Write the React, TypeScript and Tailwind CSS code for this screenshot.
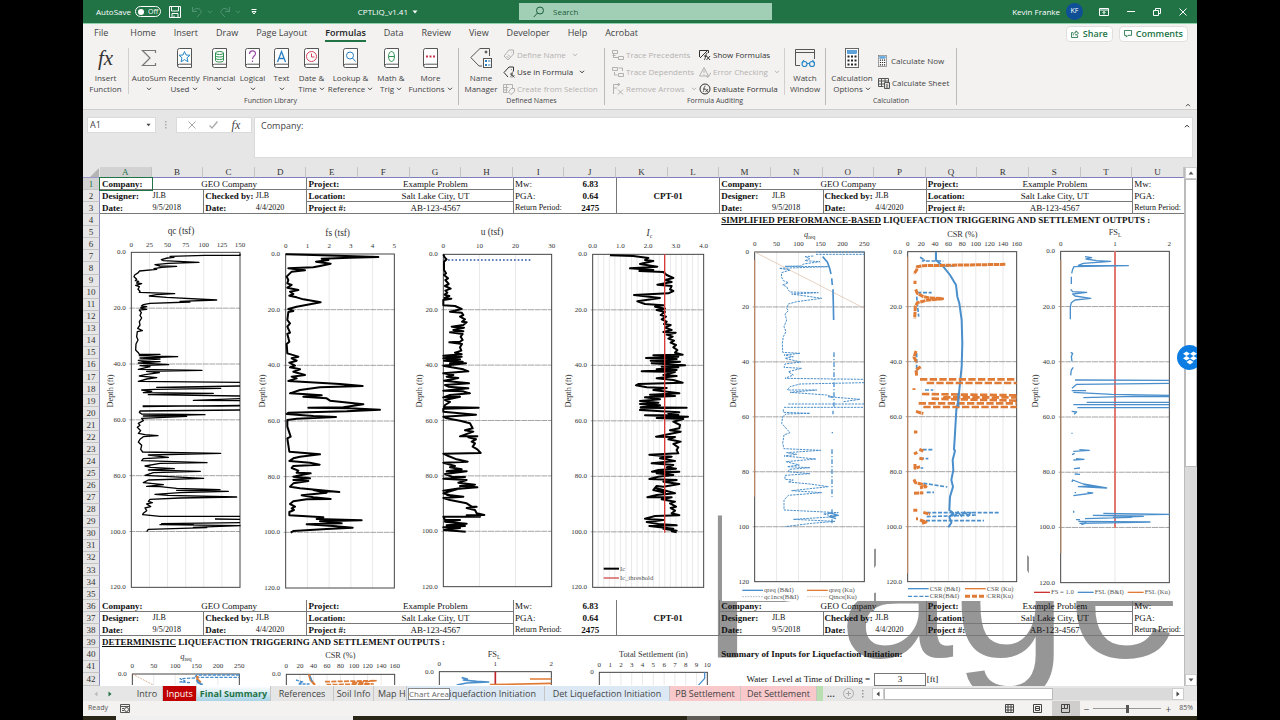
import { useState } from "react";
import type { ReactNode } from "react";

const COLUMNS = "ABCDEFGHIJKLMNOPQRSTU".split("");
const ROWS = Array.from({ length: 42 }, (_, i) => i + 1);

/* ---------- small icons ---------- */

const Caret = ({ className = "" }: { className?: string }) => (
    <svg viewBox="0 0 6 4" className={`inline-block h-1 w-1.5 ${className}`} fill="none" stroke="currentColor" strokeWidth="1">
        <path d="M1 .8 3 2.8 5 .8" />
    </svg>
);

const Triangle = ({ className = "" }: { className?: string }) => (
    <svg viewBox="0 0 6 4" className={`h-1 w-1.5 ${className}`} fill="currentColor">
        <path d="M.5.5h5L3 3.5z" />
    </svg>
);

const Book = ({ children }: { children: ReactNode }) => (
    <svg viewBox="0 0 15 20" className="h-5 w-[15px]" fill="none" strokeWidth="1">
        <path d="M2.5.5h12v19h-12a2 2 0 0 1-2-2v-15a2 2 0 0 1 2-2z" fill="#fff" stroke="#555" />
        <path d="M.5 18a2 2 0 0 1 2-1.8h12" stroke="#555" />
        {children}
    </svg>
);

const Fx = ({ className }: { className: string }) => (
    <span className={`font-['Liberation_Serif',serif] italic ${className}`}>fx</span>
);

const Calculator = ({ className }: { className: string }) => (
    <svg viewBox="0 0 14 20" className={className} fill="none">
        <rect x=".5" y=".5" width="13" height="19" fill="#fff" stroke="#666" />
        <rect x="2.5" y="2.5" width="9" height="3" fill="#5ba3dc" stroke="#2b7cc0" strokeWidth=".6" />
        <path d="M2.5 8.5h9M2.5 12.5h9M2.5 16.5h9" stroke="#222" strokeWidth="2" strokeDasharray="2 1.5" />
    </svg>
);

/* ---------- ribbon ---------- */

const BigButton = ({ icon, lines, width, caret = false }: { icon: ReactNode; lines: [string, string]; width: string; caret?: boolean }) => (
    <button className={`flex shrink-0 flex-col items-center whitespace-nowrap text-[8px] leading-[11px] ${width}`}>
        <span className="mb-1 flex h-5 items-center">{icon}</span>
        <span>{lines[0]}</span>
        <span className="flex h-[11px] items-center gap-0.5">
            {lines[1]}
            {caret && <Caret />}
        </span>
    </button>
);

const SmallButton = ({ icon, label, caret = false, disabled = false }: { icon: ReactNode; label: string; caret?: boolean; disabled?: boolean }) => (
    <button disabled={disabled} className="flex h-[13px] items-center gap-0.5 whitespace-nowrap text-[8px] leading-[13px] text-[#333] disabled:text-[#b3b1af]">
        <svg viewBox="0 0 12 12" className="h-3 w-3 shrink-0" fill="none" stroke="currentColor" strokeWidth="1">
            {icon}
        </svg>
        {label}
        {caret && <Caret className="ml-1" />}
    </button>
);

const Group = ({ label, width, children }: { label: string; width: string; children: ReactNode }) => (
    <section className={`my-1 flex shrink-0 flex-col justify-between border-r border-[#bdbbb9] ${width}`}>
        <div className="flex">{children}</div>
        <div className="text-center text-[7px] leading-[9px] text-[#444]">{label}</div>
    </section>
);

const MENU = ["Home", "Insert", "Draw", "Page Layout", "Formulas", "Data", "Review", "View", "Developer", "Help", "Acrobat"];

const Ribbon = () => (
    <div className="flex h-[66px] border-b border-[#d0cecc] bg-[#f3f2f1] text-[#444]">
        <Group label="Function Library" width="w-[376px]">
            <BigButton width="w-[46px] border-r border-[#d2d0ce]" lines={["Insert", "Function"]} icon={<Fx className="text-[21px] text-[#333]" />} />
            <BigButton
                width="w-[40px]"
                lines={["AutoSum", ""]}
                caret
                icon={
                    <svg viewBox="0 0 16 18" className="h-[18px] w-4" fill="none" stroke="#777" strokeWidth="1.2">
                        <path d="M14.500 4V1.500H1.500L9 9l-7.500 7.500h13V14" />
                    </svg>
                }
            />
            <BigButton width="w-[30px]" lines={["Recently", "Used"]} caret icon={<Book><path d="m7.500 3.500 1.500 3.500 4 .2-3 2.600 1 4-3.500-2.200L4 13.800l1-4-3-2.600 4-.2z" stroke="#2b88c8" /></Book>} />
            <BigButton
                width="w-[40px]"
                lines={["Financial", ""]}
                caret
                icon={
                    <Book>
                        <ellipse cx="7.500" cy="5" rx="4" ry="1.500" stroke="#2e9150" />
                        <path d="M3.500 5v7.500c0 2 8 2 8 0V5M3.500 7.500c0 2 8 2 8 0M3.500 10c0 2 8 2 8 0" stroke="#2e9150" />
                    </Book>
                }
            />
            <BigButton width="w-[27px]" lines={["Logical", ""]} caret icon={<Book><path d="M4.500 6c0-4 6-4 6-.5 0 2.500-3 2.500-3 5.500M7.500 12.500v1.500" stroke="#9b4fa8" strokeWidth="1.200" /></Book>} />
            <BigButton width="w-[31px]" lines={["Text", ""]} caret icon={<Book><path d="M3.500 14 7.500 3.500 11.500 14M5 10.500h5" stroke="#2b7fc2" strokeWidth="1.300" /></Book>} />
            <BigButton width="w-[29px]" lines={["Date &", "Time"]} caret icon={<Book><circle cx="7.500" cy="8.500" r="5" stroke="#d1435b" /><path d="M7.500 5.500v3.500h3" stroke="#d1435b" /></Book>} />
            <BigButton width="w-[49px]" lines={["Lookup &", "Reference"]} caret icon={<Book><circle cx="7" cy="7.500" r="3.500" stroke="#2b7fc2" /><path d="m9.500 10 3 3.500" stroke="#2b7fc2" /></Book>} />
            <BigButton width="w-[32px]" lines={["Math &", "Trig"]} caret icon={<Book><ellipse cx="7.500" cy="8.500" rx="3" ry="5" stroke="#2e9150" /><path d="M4.500 8.500h6" stroke="#2e9150" /></Book>} />
            <BigButton width="w-[47px]" lines={["More", "Functions"]} caret icon={<Book><path d="M3 8.500h9.500" stroke="#c8344a" strokeWidth="2" strokeDasharray="2 1.500" /></Book>} />
        </Group>

        <Group label="Defined Names" width="w-[146px]">
            <BigButton
                width="w-[44px]"
                lines={["Name", "Manager"]}
                icon={
                    <svg viewBox="0 0 22 22" className="h-[22px] w-[22px]" fill="none" stroke="#555">
                        <path d="M10 1.500h9.500V9M10 1.500.8 10.500 9 19h3" />
                        <circle cx="16" cy="5" r="1" fill="#555" />
                        <rect x="13.500" y="11.500" width="8" height="9" fill="#fff" />
                        <path d="M15 14h2M15 18h2" stroke="#2b7fc2" strokeWidth="2" />
                        <path d="M18 14h2.500M18 18h2.500" stroke="#2b7fc2" />
                    </svg>
                }
            />
            <div className="flex flex-col gap-1">
                <SmallButton disabled caret label="Define Name" icon={<path d="M6 1h4.500v4L5 11 1 7zM8.500 3v.5M3.500 7 6 9.500M5 5.500 7.500 8" />} />
                <SmallButton caret label="Use in Formula" icon={<><path d="M10.500 5V1H6L1 6.500 5 11M8.500 3v.5" /><path d="M10.500 5.500c-2-.5-1.500 5-3 5.500M7 8h3M9 9l2.500 2.500M11.500 9 9 11.500" strokeWidth=".8" /></>} />
                <SmallButton disabled label="Create from Selection" icon={<><path d="M.5 1.500h9V5M.5 1.500v8h4M.5 4.500h5M.5 7h4M3.500 1.500v8" /><path d="M8 5.500h3.500v3L8 11.500 5.500 9z" /></>} />
            </div>
        </Group>

        <Group label="Formula Auditing" width="w-[221px]">
            <div className="flex w-[94px] shrink-0 flex-col gap-1 pl-[7px]">
                <SmallButton disabled label="Trace Precedents" icon={<path d="M.5 1.500h5v3h-5zM.5 6.500h3M1.500 4.500v4h5M6.500 7.500h5v3h-5z" />} />
                <SmallButton disabled label="Trace Dependents" icon={<path d="M.5 1.500h5v3h-5zM6.500 2h4v3M6.500 7.500h5v3h-5zM2.500 6v3h3" />} />
                <SmallButton disabled caret label="Remove Arrows" icon={<path d="M1.500 11V1.500H8L5.500 0M8 1.500 5.500 3M1.500 5H5M6 6.500l5 5M11 6.500l-5 5" />} />
            </div>
            <div className="flex flex-col gap-1">
                <SmallButton label="Show Formulas" icon={<><path d="M.5 8V1.500h9V4M1 9 9 1" /><path d="M8.500 4c-2-.5-1.500 6-3.500 7M5 7h3M7.500 7l3.500 4M11 7l-3.500 4" /></>} />
                <SmallButton disabled caret label="Error Checking" icon={<><path d="M5 1.500 9.500 10h-9zM5 4v3M5 8v1" /><path d="m7 10 2 1.500 3-5" /></>} />
                <SmallButton label="Evaluate Formula" icon={<><circle cx="6" cy="6" r="5" /><path d="M6.500 3c-2-.5-1 5-2.500 6M4 6h2.500M6.500 6 9 9M9 6 6.500 9" strokeWidth=".8" /></>} />
            </div>
            <div className="ml-auto border-l border-[#d2d0ce]">
                <BigButton
                    width="w-[40px]"
                    lines={["Watch", "Window"]}
                    icon={
                        <svg viewBox="0 0 22 20" className="h-5 w-[22px]" fill="none" stroke="#555">
                            <path d="M6 17.500H1.500v-16h19V11M1.500 4.500h19" />
                            <g stroke="#2b88c8" strokeWidth="1.200">
                                <circle cx="10.500" cy="16" r="2.500" />
                                <circle cx="18" cy="16" r="2.500" />
                                <path d="M13 15.500h2.500M8 15l2-3M20.500 15l-2-3" />
                            </g>
                        </svg>
                    }
                />
            </div>
        </Group>

        <Group label="Calculation" width="w-[131px]">
            <BigButton width="w-[52px]" lines={["Calculation", "Options"]} caret icon={<Calculator className="h-5 w-[14px]" />} />
            <div className="flex flex-col gap-2 pt-1.5">
                <button className="flex h-[14px] items-center gap-1 whitespace-nowrap text-[8px]">
                    <Calculator className="h-3 w-[9px]" />
                    Calculate Now
                </button>
                <button className="flex h-[14px] items-center gap-0.5 whitespace-nowrap text-[8px]">
                    <svg viewBox="0 0 12 12" className="h-3 w-3" fill="none" stroke="#555">
                        <path d="M.5 1.500h10V5M.5 1.500v8h5M.5 4h10M.5 7H6M3.500 1.500v8M7 1.500V5" />
                        <path d="M6.500 5.500h5v6h-5zM8 8h2M8 10h2" fill="#ddd" />
                    </svg>
                    Calculate Sheet
                </button>
            </div>
        </Group>
        <button aria-label="Collapse the ribbon" className="mr-1.5 mb-0.5 ml-auto flex self-end">
            <Caret className="rotate-180" />
        </button>
    </div>
);

const TitleBar = () => (
    <header className="flex h-6 items-center border-b border-[#8fd0ac] bg-[#217346] text-[8px] text-white">
        <div className="flex w-[436px] shrink-0 items-center pl-[13px]">
            <label htmlFor="autosave">AutoSave</label>
            <button id="autosave" className="ml-1 flex h-[11px] w-[26px] items-center gap-1 rounded-full border border-white pl-0.5 text-[7px] leading-[9px]">
                <span className="size-1.5 rounded-full bg-white" />
                Off
            </button>
            <button aria-label="Save" className="ml-2">
                <svg viewBox="0 0 12 12" className="size-3" fill="none" stroke="#fff">
                    <path d="M.5.500h11v11H.500zM2.500.500V5h7V.500M3 11.500V7.500h6v4M5 9.500v2" />
                </svg>
            </button>
            <button aria-label="Undo" className="ml-2.5 flex items-center gap-1 text-[#4f9470]">
                <svg viewBox="0 0 12 12" className="size-3" fill="none" stroke="currentColor">
                    <path d="M1.500 1v4.500H6M1.500 5.500C5 0 12 3 9.500 7.500L6 11" />
                </svg>
                <Caret />
            </button>
            <button aria-label="Redo" className="ml-1.5 flex items-center gap-1 text-[#4f9470]">
                <svg viewBox="0 0 12 12" className="size-3" fill="none" stroke="currentColor">
                    <path d="M10.500 1v4.500H6M10.500 5.500C7 0 0 3 2.500 7.500L6 11" />
                </svg>
                <Caret />
            </button>
            <button aria-label="Customize toolbar" className="ml-2.5">
                <svg viewBox="0 0 6 6" className="size-1.5" fill="none" stroke="#fff">
                    <path d="M.5.500h5M1 2.500h4L3 5z" />
                </svg>
            </button>
            <button className="mr-[101px] ml-auto flex items-center gap-1">
                CPTLIQ_v1.41
                <Triangle />
            </button>
        </div>
        <label className="flex h-[17px] w-[253px] shrink-0 items-center bg-[#a0cfb6] pl-3.5 text-[#1c5c3a]">
            <svg viewBox="0 0 12 12" className="size-3" fill="none" stroke="currentColor">
                <circle cx="7" cy="4.500" r="3.500" />
                <path d="M4.500 7 .8 11" />
            </svg>
            <input aria-label="Search" placeholder="Search" className="ml-2 w-40 bg-transparent outline-none placeholder:text-[#1c5c3a]" />
        </label>
        <div className="ml-auto flex items-center">
            <span>Kevin Franke</span>
            <span className="ml-1.5 flex size-[17px] items-center justify-center rounded-full bg-[#0f4f96] text-[7px]">KF</span>
            <button aria-label="Ribbon display options" className="ml-4">
                <svg viewBox="0 0 10 8" className="h-2 w-2.5" fill="none" stroke="#fff">
                    <path d="M.5.500h9v7h-9zM.5 2h9M5 6.500V3.500M3.500 5 5 3.500 6.500 5" />
                </svg>
            </button>
            <button aria-label="Minimize" className="ml-[18px] h-px w-2 bg-white" />
            <button aria-label="Restore" className="ml-[18px]">
                <svg viewBox="0 0 8 8" className="size-2" fill="none" stroke="#fff">
                    <path d="M.5 2.500h5v5h-5zM2.500 2.500v-2h5v5h-2" />
                </svg>
            </button>
            <button aria-label="Close" className="mr-2.5 ml-[18px]">
                <svg viewBox="0 0 8 8" className="size-2" fill="none" stroke="#fff">
                    <path d="m.5.500 7 7M7.500.500l-7 7" />
                </svg>
            </button>
        </div>
    </header>
);

const MenuBar = () => (
    <nav className="flex h-5 items-center bg-[#f3f2f1] pr-[9px] pl-[11px] text-[9px] leading-[14px] text-[#444]">
        <button className="mr-[22px] border-b-2 border-transparent">File</button>
        <div className="flex gap-[18px]">
            {MENU.map((item) => (
                <button key={item} className={item === "Formulas" ? "border-b-2 border-[#217346] font-semibold text-[#222]" : "border-b-2 border-transparent"}>
                    {item}
                </button>
            ))}
        </div>
        <button className="ml-auto flex h-4 items-center gap-1 rounded-sm border border-[#e1dfdd] bg-white px-1 font-semibold text-[#217346]">
            <svg viewBox="0 0 9 9" className="size-2" fill="none" stroke="currentColor">
                <path d="M2.500 3H.500v5.500h7V6M2.500 6c0-2 1-3 3-3V1l3 2.500-3 2.500V4.500" />
            </svg>
            Share
        </button>
        <button className="ml-1.5 flex h-4 items-center gap-1 rounded-sm border border-[#e1dfdd] bg-white px-1 font-semibold text-[#217346]">
            <svg viewBox="0 0 9 9" className="size-2" fill="none" stroke="currentColor">
                <path d="M.5.500h8v5.500h-4l-2 2V6h-2z" />
            </svg>
            Comments
        </button>
    </nav>
);

const FormulaBar = () => (
    <div className="flex h-[57px] items-start bg-[#e6e6e6] px-1 pt-[7px] text-[#444]">
        <div className="flex h-4 w-[69px] items-center border border-[#dadada] bg-white pr-1 pl-0.5">
            <input aria-label="Name box" defaultValue="A1" className="w-14 text-[9px] outline-none" />
            <Triangle />
        </div>
        <svg viewBox="0 0 2 8" className="mx-[9px] mt-1 h-2 w-0.5" fill="#aaa">
            <path d="M0 0h1.500v1.500H0zM0 3h1.500v1.500H0zM0 6h1.500v1.500H0z" />
        </svg>
        <div className="flex h-4 w-[76px] items-center justify-around border border-[#dadada] bg-white px-1">
            <button aria-label="Cancel">
                <svg viewBox="0 0 8 8" className="size-2" stroke="#aaa"><path d="m.5.500 7 7M7.500.500l-7 7" /></svg>
            </button>
            <button aria-label="Enter">
                <svg viewBox="0 0 9 8" className="h-2 w-[9px]" fill="none" stroke="#aaa" strokeWidth="1.300"><path d="m.5 4.500 2.500 2.500L8.500.500" /></svg>
            </button>
            <button aria-label="Insert function" className="flex"><Fx className="text-[12px] leading-[14px]" /></button>
        </div>
        <div className="ml-0.5 flex h-[41px] flex-1 border border-[#dadada] bg-white">
            <textarea aria-label="Formula" defaultValue="Company:" className="flex-1 resize-none pt-px pl-1.5 text-[9px] leading-[14px] outline-none" />
            <button aria-label="Collapse formula bar" className="mt-1.5 mr-0.5 flex self-start text-[#222]">
                <Caret className="rotate-180" />
            </button>
        </div>
    </div>
);

/* ---------- sheet cells ---------- */

const LINE = "border-[#777]";

const InfoCells = ({ line, short = false }: { line: number; short?: boolean }) => {
    const values = [
        ["Example Problem", "Project:", "Mw:", "6.83"],
        ["Salt Lake City, UT", "Location:", "PGA:", "0.64"],
        ["AB-123-4567", "Project #:", "Return Period:", "2475"],
    ][line];
    const under = `border-b ${LINE}`;
    const last = line === 2 ? under : "";
    const left = short ? `border-l pl-px ${LINE}` : "pl-0.5";
    return (
        <>
            {line === 0 ? (
                <>
                    <td className={`font-bold ${left} ${under}`}>Company:</td>
                    <td colSpan={3} className={`text-center ${under}`}>GEO Company</td>
                </>
            ) : (
                <>
                    <td className={`font-bold ${left} ${last}`}>{line === 1 ? "Designer:" : "Date:"}</td>
                    <td className={`pl-px text-[8px] ${last}`}>{line === 1 ? "JLB" : "9/5/2018"}</td>
                    <td className={`border-l pl-px font-bold ${LINE} ${last}`}>{line === 1 ? "Checked by:" : "Date:"}</td>
                    <td className={`pl-px text-[8px] ${last}`}>{line === 1 ? "JLB" : "4/4/2020"}</td>
                </>
            )}
            <td className={`border-b border-l pl-px font-bold ${LINE}`}>{values[1]}</td>
            <td colSpan={3} className={`border-b text-center ${LINE}`}>{values[0]}</td>
            <td className={`border-l pl-px ${LINE} ${last} ${line === 2 ? "text-[8px]" : ""}`}>{values[2]}</td>
            {!short && (
                <>
                    <td className={`text-center font-bold ${last}`}>{values[3]}</td>
                    {line === 0 && (
                        <td rowSpan={3} colSpan={2} className={`border-b border-l text-center font-bold ${LINE}`}>CPT-01</td>
                    )}
                </>
            )}
        </>
    );
};

const OutputTitle = ({ kind }: { kind: string }) => (
    <>
        <span className="underline">{kind}</span> LIQUEFACTION TRIGGERING AND SETTLEMENT OUTPUTS :
    </>
);

const RowCells = ({ row }: { row: number }) => {
    const info = row <= 3 ? row - 1 : row >= 36 && row <= 38 ? row - 36 : -1;
    if (info >= 0) return <><InfoCells line={info} /><InfoCells line={info} short /></>;
    if (row === 4) return <><td colSpan={12} /><td colSpan={9} className="pl-0.5 font-bold"><OutputTitle kind="SIMPLIFIED PERFORMANCE-BASED" /></td></>;
    if (row === 39) return <td colSpan={21} className="pl-0.5 font-bold"><OutputTitle kind="DETERMINISTIC" /></td>;
    if (row === 40) return <><td colSpan={12} /><td colSpan={9} className="pl-0.5 font-bold">Summary of Inputs for Liquefaction Initiation:</td></>;
    if (row === 42)
        return (
            <>
                <td colSpan={12} />
                <td colSpan={3} className="pr-1 text-right">Water&nbsp; Level at Time of Drilling =</td>
                <td className={`border text-center ${LINE}`}>3</td>
                <td colSpan={5} className="pl-px">[ft]</td>
            </>
        );
    return <td colSpan={21} />;
};

const Grid = () => (
    <table className="relative h-[519px] w-full table-fixed border-separate border-spacing-0 font-['Liberation_Serif',serif] text-[9px] leading-[10px] whitespace-nowrap text-[#111]">
        <colgroup>
            <col className="w-[17px]" />
            {COLUMNS.map((c) => <col key={c} />)}
        </colgroup>
        <thead>
            <tr className="bg-[#e6e6e6]">
                <th aria-label="Select all" className="border-b border-[#9a9ac8]">
                    <svg viewBox="0 0 10 9" className="ml-auto h-[9px] w-2.5" fill="#b5b5b5"><path d="M9 0v9H0z" /></svg>
                </th>
                {COLUMNS.map((c) => (
                    <th key={c} className={c === "A" ? "border-r border-b border-r-[#c4c4c4] border-b-[#217346] bg-[#d2d2d2] font-normal text-[#217346]" : "border-r border-b border-r-[#c4c4c4] border-b-[#7d7dc0] font-normal text-[#333]"}>
                        {c}
                    </th>
                ))}
            </tr>
        </thead>
        <tbody>
            {ROWS.map((row) => (
                <tr key={row} className={row === 1 ? "[&>td:nth-child(2)]:outline-1 [&>td:nth-child(2)]:outline-[#217346]" : ""}>
                    <th scope="row" className={row === 1 ? "border-r border-b border-r-[#217346] border-b-[#c4c4c4] bg-[#d2d2d2] font-normal text-[#217346]" : "border-r border-b border-r-[#8a8ac4] border-b-[#c4c4c4] bg-[#e6e6e6] font-normal text-[#333]"}>
                        {row}
                    </th>
                    <RowCells row={row} />
                </tr>
            ))}
        </tbody>
    </table>
);

/* ---------- charts, drawn at three units to the pixel ---------- */

type ChartProps = {
    className: string;
    view: string;
    plot: [number, number, number, number];
    xLabels: string[];
    xLabelY: number;
    yLabels: string[];
    title: ReactNode;
    titleAt: [number, number];
    titleSize?: number;
    depthX?: number;
    grid?: number;
    name: string;
    children?: ReactNode;
};

const Chart = ({ className, view, plot, xLabels, xLabelY, yLabels, title, titleAt, titleSize = 28, depthX, grid, name, children }: ChartProps) => {
    const [left, right, top, bottom] = plot;
    const columns = grid ?? xLabels.length - 1;
    const rowStep = (bottom - top) / 6;
    return (
        <svg role="img" aria-label={name} viewBox={view} className={`absolute bg-white font-['Liberation_Serif',serif] ${className}`} fill="#333" fontSize="21">
            <text x={titleAt[0]} y={titleAt[1]} textAnchor="middle" fontSize={titleSize}>{title}</text>
            {xLabels.map((label, i) => (
                <text key={label} x={left + ((right - left) * i) / (xLabels.length - 1)} y={xLabelY} textAnchor="middle">{label}</text>
            ))}
            {yLabels.map((label, i) => (
                <text key={label} x={left - 17} y={top + rowStep * i + 6} textAnchor="end">{label}</text>
            ))}
            {depthX && (
                <text transform={`translate(${depthX} 693) rotate(-90)`} textAnchor="middle" fontSize="25">Depth (ft)</text>
            )}
            <g fill="none">
                {Array.from({ length: columns - 1 }, (_, i) => {
                    const x = left + ((right - left) * (i + 1)) / columns;
                    return <path key={i} d={`M${x} ${top}V${bottom}`} stroke="#dedede" strokeWidth="2" />;
                })}
                {[1, 2, 3, 4, 5].map((i) => (
                    <path key={i} d={`M${left - 6} ${top + rowStep * i}H${right}`} stroke="#777" strokeWidth="2" strokeDasharray="18 2" />
                ))}
                <rect x={left} y={top} width={right - left} height={bottom - top} stroke="#444" strokeWidth="3" />
                <g strokeLinejoin="round">{children}</g>
            </g>
        </svg>
    );
};

const TENTHS = ["0.0", "20.0", "40.0", "60.0", "80.0", "100.0", "120.0"];

const QC = "480,281 480,286 375,286 270,289 282,292 262,294 244,299 250,302 357,307 265,310 225,314 240,318 290,319 245,322 222,326 230,328 178,333 175,338 164,345 162,350 170,358 166,362 176,364 170,369 185,371 167,376 178,380 174,388 180,394 178,397 284,401 230,404 208,408 260,412 410,420 300,424 330,426 210,430 190,434 184,438 200,440 182,444 200,448 178,450 184,458 180,466 185,474 178,485 180,495 173,505 187,512 172,515 170,530 174,540 168,552 167,570 175,578 178,583 240,583 178,587 293,590 180,594 240,597 175,601 190,605 240,605 175,609 266,614 180,617 210,620 175,628 366,631 200,634 238,638 195,644 178,648 230,653 200,657 190,660 175,664 480,667M480,678 230,682 422,685 225,688 185,690 215,694 190,698 400,700 205,704 480,708M480,716 340,721 480,722M480,736 188,740M188,738 480,738M480,750 180,753 178,757 185,762 375,764 190,768 320,769 185,775 190,782 175,790 180,796 172,802 182,812 175,820 195,824 234,827 190,830 180,838 175,846 185,856 182,868 188,876 422,880 205,885 265,892 190,896 185,902 381,908 240,910 195,918 212,922 283,926 205,930 361,934 220,938 195,946 371,955 205,960 190,968 250,974 200,979 240,980 290,985 420,989 290,991 445,994 300,998 225,1003 265,1006 470,1011 300,1014 210,1018 205,1024 217,1028 200,1032 212,1040 195,1044 200,1052 190,1060 188,1064 240,1069 480,1069M480,1078 405,1077M480,1088 245,1091 340,1092 240,1094 480,1097 340,1102 380,1103 205,1108 200,1115";
const FS = "617,283 700,285 895,291 810,293 725,296 745,300 708,305 752,311 720,318 700,322 625,325 675,331 635,335 620,350 625,360 622,370 635,375 622,383 655,390 630,395 640,402 628,407 650,412 670,418 722,427 690,433 650,440 625,447 640,453 625,456 622,480 630,490 622,500 630,518 622,522 628,545 620,552 622,580 655,590 635,595 650,602 628,608 645,617 630,622 660,628 640,635 675,645 635,650 650,655 625,663 780,672 848,678 720,682 660,690 630,700 680,703 725,706 670,710 740,715 750,722 850,733 790,742 685,743 810,745 900,749 800,754 625,758 620,762 700,768 768,771 650,776 622,780 622,800 632,830 622,835 628,875 720,883 660,890 640,895 628,903 690,908 719,914 640,918 635,924 655,932 650,938 692,940 660,946 640,950 690,955 640,960 685,963 640,970 630,980 660,985 778,996 700,990 740,998 665,1006 700,1012 752,1017 680,1018 640,1024 630,1032 645,1040 635,1045 642,1050 628,1056 628,1066 730,1072 710,1077 845,1081 720,1084 785,1090 680,1093 760,1098 818,1103 740,1107 640,1113 632,1118";
const U = "130,283 134,292 140,298 132,305 132,330 138,340 132,345 144,355 136,360 146,372 135,378 152,386 136,392 142,398 134,404 148,408 134,414 154,416 130,420 130,436 165,438 185,447 150,455 185,458 190,465 180,470 195,478 186,485 200,487 190,495 155,500 192,503 160,510 190,514 150,517 188,522 182,530 188,540 180,545 148,547 186,552 180,562 184,572 165,578 185,583 130,587 185,590 130,595 180,598 132,602 188,605 150,610 198,610 130,617 155,622 190,628 205,634 130,640 160,645 140,650 175,654 132,662 207,670 135,675 145,680 205,685 130,692 190,694 210,700 150,705 130,712 180,710 135,720 150,726 135,735 132,741 236,743 130,746 130,755 228,764 130,770 140,775 180,782 210,790 218,805 195,811 220,815 180,829 232,829 205,832 228,838 215,845 225,850 218,860 232,868 242,879 130,881 145,888 170,898 203,905 130,908 165,918 150,922 185,928 140,934 200,934 135,942 155,950 195,951 130,956 200,960 175,968 225,974 180,978 232,982 160,988 130,992 180,985 130,1000 165,1010 140,1004 190,1010 130,1014 150,1020 200,1030 215,1040 230,1040 200,1044 225,1050 230,1060 253,1065 200,1066 240,1070 130,1070 135,1080 180,1080 135,1085 200,1091 140,1096 195,1098 130,1102 180,1104 132,1110 197,1115";
const IC = "630,286 700,288 745,294 735,300 760,303 720,312 772,320 690,325 760,330 718,333 790,336 800,345 820,354 795,360 815,366 772,374 815,378 810,388 820,393 805,400 702,405 780,414 712,424 735,432 790,436 765,440 795,446 770,450 795,456 782,465 798,470 785,478 800,485 792,492 812,495 795,503 815,510 790,516 827,518 800,524 818,530 805,536 822,542 812,548 828,555 820,562 832,570 825,578 848,584 760,586 835,590 738,594 830,597 752,602 840,605 800,610 755,610 855,616 785,620 835,622 770,628 830,630 725,634 825,636 790,645 830,648 770,655 820,660 848,668 715,672 708,676 740,682 800,684 760,690 838,700 750,704 825,708 735,712 780,718 720,723 775,728 720,732 780,736 722,742 860,743 730,745 720,750 838,757 805,760 835,765 735,766 864,770 770,774 850,777 820,785 840,795 838,805 810,811 842,815 768,830 825,831 805,838 842,845 820,852 835,862 830,870 835,880 748,884 815,890 780,895 825,903 755,910 820,915 800,922 828,926 775,930 756,935 838,935 770,940 820,945 775,950 748,957 830,960 790,965 838,972 790,980 770,978 760,990 795,998 770,985 825,1000 770,1005 742,1012 815,1012 785,1018 825,1025 810,1030 828,1040 812,1044 825,1052 815,1060 838,1066 765,1068 735,1076 790,1080 740,1086 775,1092 830,1096 748,1098 820,1106 790,1106 830,1112 815,1114 830,1117";
const QREQ = "463,276 318,276M318,283 463,283M310,288 285,290 300,296 285,302 330,305 280,312 275,318 225,319 355,320 208,325 240,330 215,338 214,350 220,362 235,368 218,375 230,380 235,390 240,396 325,398 245,402 335,415 260,425 235,432 230,445 235,452 225,462 230,480 222,500 228,515 220,530 217,550 218,577 270,580 222,585 250,590 225,595 272,606 225,612 222,622 275,625 235,635 250,645 225,655 463,658M463,668 270,672 240,680 232,690 320,690 240,697 350,705 370,712 355,710 450,718 400,725M235,732 463,732M222,742 463,742M220,748 220,757 300,760 228,762 218,770 215,790 240,818 222,825 218,850 222,866 332,871 230,878 260,883 222,888 318,897 228,905 268,915 232,920 300,923 238,928 235,935 300,941 225,946 225,958 250,960 235,966 300,972 355,980 245,992 335,998 235,1006 222,1020 222,1050 385,1058 340,1062 378,1070 250,1078 375,1084 305,1090 225,1100";

const BLUE = "#4a8fcb";
const ORANGE = "#e07b35";

const LegendItem = ({ x, y, length, color, width = 4, dash, label }: { x: number; y: number; length: number; color: string; width?: number; dash?: string; label: string }) => (
    <>
        <path d={`M${x} ${y}h${length}`} stroke={color} strokeWidth={width} strokeDasharray={dash} />
        <text x={x + length + 3} y={y + 6} fill="#555" fontSize="20">{label}</text>
    </>
);

const sub = (main: string, lower: string, italic = false) => (
    <>
        <tspan fontStyle={italic ? "italic" : "normal"}>{main}</tspan>
        <tspan dy="6" fontSize="17">{lower}</tspan>
    </>
);

const Charts = () => (
    <>
        <Chart name="qc" className="top-[55px] left-[19px] h-[378px] w-[148px]" view="66 186 444 1134" plot={[154, 480, 277, 1282]} xLabels={["0", "25", "50", "75", "100", "125", "150"]} xLabelY={260} yLabels={TENTHS} title="qc (tsf)" titleAt={[303, 221]} depthX={99}>
            <path d={`M${QC}`} stroke="#000" strokeWidth="4" />
        </Chart>
        <Chart name="fs" className="top-[55px] left-[171px] h-[378px] w-[150px]" view="522 186 450 1134" plot={[617, 943, 282, 1284]} xLabels={["0", "1", "2", "3", "4", "5"]} xLabelY={264} yLabels={TENTHS} title="fs (tsf)" titleAt={[773, 227]} depthX={555}>
            <polyline points={FS} stroke="#000" strokeWidth="6" />
        </Chart>
        <Chart name="u" className="top-[55px] left-[327px] h-[378px] w-[152px]" view="30 186 456 1134" plot={[130, 455, 283, 1280]} xLabels={["0", "10", "20", "30"]} xLabelY={265} yLabels={TENTHS} title="u (tsf)" titleAt={[276, 225]} depthX={65}>
            <path d="M133 300H392" stroke="#2f55a4" strokeWidth="5" strokeDasharray="5 6" />
            <polyline points={U} stroke="#000" strokeWidth="6" />
        </Chart>
        <Chart name="Ic" className="top-[55px] left-[481px] h-[378px] w-[152px]" view="492 186 456 1134" plot={[578, 911, 283, 1282]} xLabels={["0.0", "1.0", "2.0", "3.0", "4.0"]} xLabelY={264} yLabels={TENTHS} title={sub("I", "c", true)} titleAt={[748, 229]} depthX={512} grid={20}>
            <polyline points={IC} stroke="#000" strokeWidth="6" />
            <path d="M794 283V1118" stroke="#d93a3a" strokeWidth="4" />
            <LegendItem x={611} y={1226} length={46} color="#000" width={6} label="Ic" />
            <LegendItem x={611} y={1254} length={46} color="#d05050" label="Ic_threshold" />
        </Chart>
        <Chart name="qreq" className="top-[59px] left-[639px] h-[375px] w-[152px]" view="36 198 456 1125" plot={[134, 463, 276, 1265]} xLabels={["0", "50", "100", "150", "200", "250"]} xLabelY={257} yLabels={["0", "20", "40", "60", "80", "100", "120"]} title={sub("q", "req", true)} titleAt={[299, 231]} titleSize={25} depthX={77}>
            <path d="M134 276 463 445" stroke="#dcb9a0" strokeWidth="2" />
            <path d="M134 300V1010" stroke="#cf8d62" strokeWidth="3" />
            <path d={`M${QREQ}`} stroke={BLUE} strokeWidth="3" strokeDasharray="7 3" />
            <path d="M338 290 352 306 359 325 363 342M365 355 367 375M369 388 371 480" stroke={BLUE} strokeWidth="5" />
            <path d="M372 577V740M369 752V763M367 816V820M366 868V1010M366 1048V1090" stroke={BLUE} strokeWidth="4" strokeDasharray="14 6 4 6" />
            <path d="M355 1058 385 1066 358 1070 378 1076" stroke={BLUE} strokeWidth="4" />
            <LegendItem x={97} y={1291} length={62} color={BLUE} label="qreq (B&amp;I)" />
            <LegendItem x={291} y={1291} length={62} color={ORANGE} label="qreq (Ku)" />
            <LegendItem x={97} y={1310} length={62} color="#8399ad" width={2} dash="5 3" label="qc1ncs(B&amp;I)" />
            <LegendItem x={291} y={1310} length={62} color="#d0b5a2" width={2} dash="5 2" label="Qtncs(Ku)" />
        </Chart>
        <Chart name="CSR" className="top-[59px] left-[793px] h-[375px] w-[151px]" view="498 198 453 1125" plot={[593, 920, 275, 1265]} xLabels={["0", "20", "40", "60", "80", "100", "120", "140", "160"]} xLabelY={257} yLabels={TENTHS} title="CSR (%)" titleAt={[757, 230]} titleSize={25} depthX={524}>
            <path d="M593 290V1240" stroke="#cf8d62" strokeWidth="3" />
            <path d="M630 292 645 300 638 303H700M620 318H740M622 398H665M620 410 626 470M645 690H670M638 869H668M630 896H655M632 924H640M640 970 712 981M650 997H672M650 1058H866M650 1070 800 1065M648 1082H822M620 580V640" stroke={BLUE} strokeWidth="5" strokeDasharray="12 5" />
            <path d="M678 275V300L700 320 720 345 738 375 742 410 748 430 755 480 757 550 755 620 749 680 745 720 739 750 735 820 732 868 735 872 728 900 730 930 724 960 729 980 720 1010 718 1050 730 1060 718 1070 724 1088 715 1102" stroke={BLUE} strokeWidth="6" />
            <path d="M724 1056 734 1068 744 1056 754 1068 764 1056 774 1068 784 1056" stroke={BLUE} strokeWidth="5" />
            <path d="M886 313 640 317 622 320 620 330 612 342M615 362V372M617 388 622 400 640 410 660 414 698 416 650 421 622 428 616 440 614 475M618 573 612 592 621 608M632 620 618 630 620 648M612 685V690M618 754 640 761M612 816H622M628 868 640 873M612 882 622 877M628 895 640 897M615 912V925L630 920M612 958 616 968 640 974 648 980 630 983M612 1000 640 998M610 1051H622M640 1057 660 1063M618 1076H624M630 1080 648 1086 636 1090" stroke={ORANGE} strokeWidth="9" strokeDasharray="16 2" />
            <path d="M630 658H920M650 669H920M636 702 920 706M700 712H920M665 716 920 722M626 730H920M640 741H920" stroke={ORANGE} strokeWidth="8" strokeDasharray="22 7" />
            <path d="M745 700V740" stroke={BLUE} strokeWidth="6" />
            <LegendItem x={594} y={1286} length={62} color={BLUE} label="CSR (B&amp;I)" />
            <LegendItem x={765} y={1286} length={62} color={ORANGE} label="CSR (Ku)" />
            <LegendItem x={594} y={1309} length={62} color={BLUE} dash="12 5" label="CRR(B&amp;I)" />
            <LegendItem x={765} y={1309} length={64} color={ORANGE} width={9} dash="15 6" label="CRR(Ku)" />
        </Chart>
        <Chart name="FSL" className="top-[59px] left-[946px] h-[375px] w-[155px]" view="237 198 465 1125" plot={[332, 658, 274, 1268]} xLabels={["0", "1", "2"]} xLabelY={257} yLabels={TENTHS} title={sub("FS", "L")} titleAt={[495, 226]} titleSize={25} depthX={265}>
            <path d="M333 300V1180" stroke="#d8a37f" strokeWidth="3" />
            <path d="M495 274V1104" stroke="#e2776f" strokeWidth="6" />
            <path d="M405 290 425 293 408 297 440 302 482 304 400 310 385 316 535 317 372 320 368 328 365 340M364 350V372M362 388 368 395 410 397 368 402 375 408 422 415 375 420 364 428 361 440V478M362 577 368 580 364 590 366 604M370 622 364 630 362 646M375 660 658 661M658 670 380 673 366 685M365 692H408M370 697 485 703 658 706M400 713 550 709 658 710M410 727H658M370 734H658M382 743H658M365 754 380 756 372 763M366 818V821M366 884 374 880M370 874 418 871 388 869M370 900 402 898 378 896M372 926 390 924M374 942 390 943M366 966 368 960 400 972 470 984 385 980 435 978 400 973M376 996V1000M370 1007 428 999 412 997M371 1052V1058M460 1060 658 1063 430 1066 580 1069 490 1072 545 1072 405 1076M378 1079 390 1079M385 1084 600 1086 390 1090 408 1089 394 1094" stroke={BLUE} strokeWidth="4" />
            <LegendItem x={252} y={1297} length={48} color="#c33" label="FS = 1.0" />
            <LegendItem x={383} y={1297} length={48} color={BLUE} label="FSL (B&amp;I)" />
            <LegendItem x={533} y={1297} length={48} color={ORANGE} label="FSL (Ku)" />
        </Chart>

        <Chart name="Deterministic qreq" className="top-[484px] left-[19px] h-[34px] w-[150px]" view="66 1473 450 102" plot={[157, 478, 1542, 2532]} xLabels={["0", "50", "100", "150", "200", "250"]} xLabelY={1523} yLabels={["0.0"]} title={sub("q", "req", true)} titleAt={[318, 1496]} titleSize={25}>
            <path d="M157 1542 220 1575" stroke="#c98d62" strokeWidth="2" strokeDasharray="6 3" />
            <path d="M478 1545H350L345 1552H478M345 1554 300 1556 315 1563 300 1566 330 1568" stroke={BLUE} strokeWidth="4" strokeDasharray="10 4" />
            <path d="M352 1548V1558L362 1568" stroke={ORANGE} strokeWidth="7" />
            <path d="M350 1560 355 1568 368 1575" stroke={BLUE} strokeWidth="6" />
        </Chart>
        <Chart name="Deterministic CSR" className="top-[484px] left-[171px] h-[34px] w-[152px]" view="522 1473 456 102" plot={[619, 944, 1543, 2533]} xLabels={["0", "20", "40", "60", "80", "100", "120", "140", "160"]} xLabelY={1523} yLabels={["0.0"]} title="CSR (%)" titleAt={[781, 1494]} titleSize={25}>
            <path d="M687 1543 692 1560 705 1575" stroke={ORANGE} strokeWidth="7" />
            <path d="M690 1548 697 1565" stroke={BLUE} strokeWidth="4" />
            <path d="M648 1560 668 1566 655 1572 690 1572" stroke={BLUE} strokeWidth="4" strokeDasharray="9 3" />
            <path d="M735 1565 888 1562 815 1569 880 1572 740 1574" stroke={ORANGE} strokeWidth="5" strokeDasharray="15 4" />
        </Chart>
        <Chart name="Deterministic FSL" className="top-[484px] left-[327px] h-[34px] w-[160px]" view="30 1473 480 102" plot={[118, 454, 1535, 2525]} xLabels={["0", "1", "2"]} xLabelY={1517} yLabels={["0.0"]} title={sub("FS", "L")} titleAt={[282, 1491]} titleSize={25}>
            <path d="M286 1535V1575" stroke="#c0272d" strokeWidth="5" />
            <path d="M185 1553 202 1557 190 1560 230 1564 266 1566 200 1569 170 1575" stroke={BLUE} strokeWidth="5" />
            <path d="M390 1557H454M454 1570 270 1574" stroke={ORANGE} strokeWidth="5" />
        </Chart>
        <Chart name="Total settlement" className="top-[484px] left-[501px] h-[34px] w-[132px]" view="552 1473 396 102" plot={[598, 922, 1537, 2527]} xLabels={["0", "1", "2", "3", "4", "5", "6", "7", "8", "9", "10"]} xLabelY={1521} yLabels={["0"]} title="Total Settlement (in)" titleAt={[760, 1491]} titleSize={25}>
            <path d="M914 1537V1555L895 1576" stroke={BLUE} strokeWidth="4" />
        </Chart>
    </>
);

const Sheet = () => (
    <div className="flex">
        <main className="relative h-[519px] flex-1 overflow-hidden bg-white">
            <div aria-hidden="true" className="absolute top-[316px] left-[618px] font-['Liberation_Sans',sans-serif] text-[206px] leading-none text-[#969696]">Page</div>
            <Grid />
            <Charts />
        </main>
        <div className="flex w-[13px] flex-col items-center border-l border-[#bbb] bg-[#dadada]">
            <button aria-label="Scroll up" className="flex h-3 w-full items-center justify-center border border-[#ccc] bg-white text-[#555]"><Triangle className="rotate-180" /></button>
            <div className="h-[288px] w-full border border-[#bbb] bg-white" />
            <button aria-label="Scroll down" className="mt-auto flex h-3 w-full items-center justify-center border border-[#ccc] bg-white text-[#555]"><Triangle /></button>
        </div>
    </div>
);

/* ---------- bottom bars ---------- */

const TABS = [
    { label: "Intro", style: "w-[31px] justify-center" },
    { label: "Inputs", style: "w-[34px] justify-center bg-[#c00000] text-white" },
    { label: "Final Summary", style: "w-[74px] justify-center bg-linear-to-b from-white to-[#a9d3e6] font-bold text-[#217346]" },
    { label: "References", style: "w-[63px] justify-center" },
    { label: "Soil Info", style: "w-[40px] justify-center" },
    { label: "Map Help", style: "w-[33px] justify-start pl-1" },
    { label: "PB Liquefaction Initiation", style: "w-[138px] justify-end bg-[#dce9f4] pr-2" },
    { label: "Det Liquefaction Initiation", style: "w-[125px] justify-center bg-[#dce9f4]" },
    { label: "PB Settlement", style: "w-[71px] justify-center bg-[#f9c8cb]" },
    { label: "Det Settlement", style: "w-[76px] justify-center bg-[#f9c8cb]" },
];

const SheetTabs = () => (
    <div className="relative flex h-[15px] items-center bg-[#e6e6e6] text-[9px] leading-[14px] text-[#444]">
        <button aria-label="Previous sheets" className="ml-2.5 text-[#bbb]"><Triangle className="rotate-90" /></button>
        <button aria-label="Next sheets" className="mr-[19px] ml-2 text-[#217346]"><Triangle className="-rotate-90" /></button>
        {TABS.map(({ label, style }) => (
            <button key={label} className={`flex h-full shrink-0 items-center overflow-hidden border-r border-[#c6c6c6] whitespace-nowrap ${style}`}>{label}</button>
        ))}
        <span className="h-full w-1.5 shrink-0 bg-[#b9deb0]" />
        <button className="ml-1 font-bold">...</button>
        <button aria-label="New sheet" className="ml-2 text-[#aaa]">
            <svg viewBox="0 0 11 11" className="size-[11px]" fill="none" stroke="currentColor"><circle cx="5.500" cy="5.500" r="5" /><path d="M5.500 3v5M3 5.500h5" /></svg>
        </button>
        <svg viewBox="0 0 2 8" className="mx-2 h-2 w-0.5" fill="#999"><path d="M0 0h1.500v1.500H0zM0 3h1.500v1.500H0zM0 6h1.500v1.500H0z" /></svg>
        <div className="mr-[13px] flex h-3 flex-1 bg-[#dadada]">
            <button aria-label="Scroll left" className="flex w-3 items-center justify-center border border-[#ccc] bg-white"><Triangle className="rotate-90" /></button>
            <div className="w-[169px] border border-[#bbb] bg-white" />
            <button aria-label="Scroll right" className="ml-auto flex w-3 items-center justify-center border border-[#ccc] bg-white"><Triangle className="-rotate-90" /></button>
        </div>
        <div role="tooltip" className="absolute top-0.5 left-[325px] z-10 flex h-3 w-[42px] items-center justify-center border border-[#888] bg-white text-[8px] whitespace-nowrap text-[#666]">Chart Area</div>
    </div>
);

const StatusBar = () => {
    const [zoom, setZoom] = useState(85);
    return (
        <footer className="flex h-[15px] items-center bg-[#f3f2f1] pr-1 pl-[5px] text-[7px] text-[#555]">
            <span>Ready</span>
            <svg viewBox="0 0 10 9" className="ml-3 h-[9px] w-2.5" fill="none" stroke="#555"><path d="M.5.500h9v8h-9zM.5 2.500h9M2 4.500h2M2 6.500h2" /><circle cx="6.500" cy="5.500" r="2" /></svg>
            <div className="ml-auto flex h-full items-center">
                <button aria-label="Normal view" className="flex h-full w-7 items-center justify-center">
                    <svg viewBox="0 0 9 9" className="size-[9px]" fill="none" stroke="#444"><path d="M.5.500h8v8h-8zM3 .500v8M6 .500v8M.5 3h8M.5 6h8" /></svg>
                </button>
                <button aria-label="Page layout" className="flex h-full w-7 items-center justify-center">
                    <svg viewBox="0 0 9 9" className="size-[9px]" fill="none" stroke="#444"><path d="M.5.500h8v8h-8zM2.500 2.500h4v4h-4zM3 4.500h3" /></svg>
                </button>
                <button aria-label="Page break preview" className="flex h-full w-7 items-center justify-center bg-[#d0cecc]">
                    <svg viewBox="0 0 9 9" className="size-[9px]" fill="none" stroke="#444"><path d="M.5.500h8v8h-8zM3.500.500v4h3v-4M.5 4.500h3" /></svg>
                </button>
                <button aria-label="Zoom out" className="ml-1 text-[10px] leading-[10px]">−</button>
                <input type="range" aria-label="Zoom" min={10} max={160} value={zoom} onChange={(e) => setZoom(parseInt(e.currentTarget.value))} className="mx-1 h-px w-[68px] appearance-none bg-[#999] [&::-webkit-slider-thumb]:h-2 [&::-webkit-slider-thumb]:w-[3px] [&::-webkit-slider-thumb]:appearance-none [&::-webkit-slider-thumb]:bg-[#555]" />
                <button aria-label="Zoom in" className="text-[10px] leading-[10px]">+</button>
                <span className="ml-2">{zoom}%</span>
            </div>
        </footer>
    );
};

const App = () => (
    <div className="min-h-screen bg-black px-[83px]">
        <div className="relative overflow-hidden font-['Open_Sans','Noto_Sans',sans-serif]">
            <TitleBar />
            <MenuBar />
            <Ribbon />
            <FormulaBar />
            <Sheet />
            <SheetTabs />
            <StatusBar />
            <div className="flex h-1 bg-[#2a2719]">
                <span className="ml-[33px] w-[237px] bg-[#f0f0f0]" />
                <span className="ml-[334px] w-[33px] bg-[#5f5c55]" />
            </div>
            <button aria-label="Dropbox" className="absolute top-[345px] -right-[5px] flex size-[25px] items-center justify-center rounded-full bg-[#0d7de4]">
                <svg viewBox="0 0 16 14" className="h-[14px] w-4" fill="#fff">
                    <path d="m4.500.500 3.500 2.200-3.500 2.300L1 2.700zM11.500.500 15 2.700 11.500 5 8 2.700zM4.500 5 8 7.200 4.500 9.500 1 7.200zM11.500 5 15 7.200l-3.500 2.300L8 7.200zM8 8.800l3.500 2.300L8 13.400l-3.500-2.300z" />
                </svg>
            </button>
        </div>
    </div>
);

export default App;
